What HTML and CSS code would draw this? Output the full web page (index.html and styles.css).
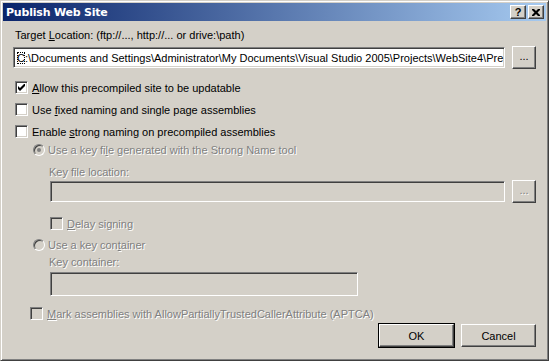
FILE: index.html
```html
<!DOCTYPE html>
<html>
<head>
<meta charset="utf-8">
<link rel="stylesheet" href="styles.css">
</head>
<body>
<div class="window">
  <div class="titlebar">
    <span class="title">Publish Web Site</span>
    <div class="tbtns">
      <span class="tbtn">?</span>
      <span class="tbtn"><svg width="8" height="7" viewBox="0 0 8 7"><path d="M0 0h2l2 2 2-2h2v1L5.5 3.5 8 6v1H6L4 5 2 7H0V6l2.5-2.5L0 1z" fill="#000"/></svg></span>
    </div>
  </div>
  <div class="content">
    <div class="label l-target">Target <u>L</u>ocation: (ftp://..., http://... or drive:\path)</div>
    <div class="inrow r1">
      <div class="input wide"><span class="caret">C</span>:\Documents and Settings\Administrator\My Documents\Visual Studio 2005\Projects\WebSite4\Pre</div>
      <div class="btn dots">...</div>
    </div>
    <div class="check c1"><span class="box"><svg width="7" height="7" viewBox="0 0 7 7"><path d="M0 2v3l2 2 5-5V-1L2 4z" fill="#000"/></svg></span><span><u>A</u>llow this precompiled site to be updatable</span></div>
    <div class="check c2"><span class="box"></span><span>Use <u>f</u>ixed naming and single page assemblies</span></div>
    <div class="check c3"><span class="box"></span><span>Enable <u>s</u>trong naming on precompiled assemblies</span></div>
    <div class="check radio ra1 dis"><span class="rad"><span class="dot"></span></span><span>Use a key fi<u>l</u>e generated with the Strong Name tool</span></div>
    <div class="label sub l-key dis">Key file location:</div>
    <div class="inrow r2 sub2">
      <div class="input wide disin"></div>
      <div class="btn dots dis">...</div>
    </div>
    <div class="check sub2 delay dis"><span class="box disbox"></span><span><u>D</u>elay signing</span></div>
    <div class="check radio ra2 dis"><span class="rad"></span><span>Use a key con<u>t</u>ainer</span></div>
    <div class="label sub l-cont dis">Key container:</div>
    <div class="inrow r3 sub2">
      <div class="input short disin"></div>
    </div>
    <div class="check mark dis"><span class="box disbox"></span><span><u>M</u>ark assemblies with AllowPartiallyTrustedCallerAttribute (APTCA)</span></div>
    <div class="btnrow">
      <div class="btn push default">OK</div>
      <div class="btn push">Cancel</div>
    </div>
  </div>
</div>
</body>
</html>
```
FILE: styles.css
```css
* { box-sizing: border-box; }
html, body { margin: 0; padding: 0; background: #d4d0c8; }
body { font-family: "Liberation Sans", Arial, sans-serif; font-size: 11px; color: #000; }
.window {
  width: 549px; height: 361px;
  border: 1px solid; border-color: #d4d0c8 #404040 #404040 #d4d0c8;
  box-shadow: inset 1px 1px 0 #fff, inset -1px -1px 0 #808080;
  padding: 2px;
  background: #d4d0c8;
  display: flex; flex-direction: column;
}
.titlebar {
  height: 18px;
  background: linear-gradient(to right, #0a246a, #a6caf0);
  display: flex; align-items: center; justify-content: space-between;
  padding: 0 2px 0 3px;
}
.title { color: #fff; font-weight: bold; font-size: 11px; font-family: "DejaVu Sans", Verdana, sans-serif; letter-spacing: -0.2px; }
.tbtns { display: flex; gap: 2px; }
.tbtn {
  width: 16px; height: 14px; background: #d4d0c8;
  border: 1px solid; border-color: #fff #404040 #404040 #fff;
  box-shadow: inset -1px -1px 0 #808080;
  display: flex; align-items: center; justify-content: center;
  font-weight: bold; font-size: 11px; line-height: 1;
}
.content { padding: 0 10px 0 12px; display: flex; flex-direction: column; }
.label { height: 13px; line-height: 13px; white-space: nowrap; }
.l-target { margin-top: 8px; }
.inrow { display: flex; align-items: center; gap: 7px; height: 23px; }
.r1 { margin-top: 4px; margin-left: -2px; }
.input {
  height: 21px; min-width: 0;
  border: 1px solid; border-color: #808080 #fff #fff #808080;
  box-shadow: inset 1px 1px 0 #404040, inset -1px -1px 0 #d4d0c8;
  background: #fff; padding: 3px 3px 0 3px;
  white-space: nowrap; overflow: hidden; line-height: 14px;
}
.wide { flex: 1; }
.short { width: 308px; height: 24px; }
.disin { background: #d4d0c8; }
.caret { outline: 1px dotted #000; outline-offset: -1px; }
.btn {
  height: 23px; background: #d4d0c8;
  border: 1px solid; border-color: #fff #404040 #404040 #fff;
  box-shadow: inset -1px -1px 0 #808080;
  display: flex; align-items: center; justify-content: center;
}
.dots { width: 24px; flex: none; padding-bottom: 3px; }
.check { display: flex; align-items: center; height: 13px; white-space: nowrap; }
.box {
  width: 13px; height: 13px; flex: none;
  border: 1px solid; border-color: #808080 #fff #fff #808080;
  box-shadow: inset 1px 1px 0 #404040, inset -1px -1px 0 #d4d0c8;
  background: #fff; margin-right: 4px;
  display: flex; align-items: center; justify-content: center;
}
.disbox { background: #d4d0c8; }
.c1 { margin-top: 12px; }
.c2 { margin-top: 9px; }
.c3 { margin-top: 9px; }
.rad {
  width: 12px; height: 12px; flex: none; border-radius: 50%;
  border: 1px solid; border-color: #808080 #fff #fff #808080;
  box-shadow: inset 1px 1px 0 #404040, inset -1px -1px 0 #d4d0c8;
  background: #d4d0c8; margin-right: 3px;
  display: flex; align-items: center; justify-content: center;
}
.dot { width: 4px; height: 4px; border-radius: 50%; background: #808080; }
.radio { margin-left: 18px; }
.ra1 { margin-top: 5px; }
.sub { margin-left: 34px; }
.sub2 { margin-left: 35px; }
.l-key { margin-top: 10px; }
.r2 { margin-top: 1px; }
.delay { margin-top: 14px; }
.ra2 { margin-top: 8px; }
.l-cont { margin-top: 5px; }
.r3 { margin-top: 3px; height: 24px; }
.mark { margin-top: 11px; margin-left: 15px; }
.dis { color: #808080; text-shadow: 1px 1px 0 #fff; }
.btnrow { display: flex; justify-content: flex-end; gap: 7px; margin-top: 4px; }
.push { width: 75px; }
.default { outline: 1px solid #000; outline-offset: 0; }
```
